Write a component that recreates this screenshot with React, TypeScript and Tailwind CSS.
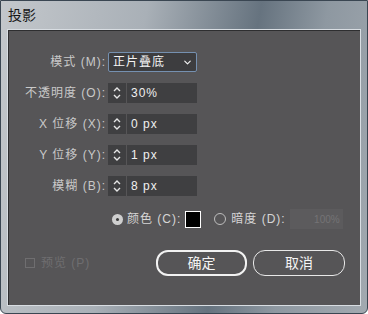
import { ChevronDown } from "lucide-react";

const font = { fontFamily: '"Liberation Sans", "Noto Sans CJK SC", sans-serif' };

function Spinner() {
  return (
    <svg width="10" height="16" viewBox="0 0 10 16" className="text-[#e6e6e6]">
      <path d="M2 6 L5 3 L8 6" fill="none" stroke="currentColor" strokeWidth="1.4" />
      <path d="M2 10 L5 13 L8 10" fill="none" stroke="currentColor" strokeWidth="1.4" />
    </svg>
  );
}

function NumberField({ value }: { value: string }) {
  return (
    <div className="flex h-[20px] w-[89px]">
      <div className="flex w-[18px] items-center justify-center bg-[#3f3f41]">
        <Spinner />
      </div>
      <div className="ml-px flex flex-1 items-center bg-[#3f3f41] pl-[4px] text-[12px] tracking-[1px] text-[#f0f0f0]">
        {value}
      </div>
    </div>
  );
}

function Row({ label, children }: { label: string; children: React.ReactNode }) {
  return (
    <div className="flex h-[20px] items-center">
      <div className="w-[99px] whitespace-pre pr-[1px] text-right text-[12px] tracking-[1px] text-[#c9c9c9]">{label}</div>
      <div className="ml-[1px]">{children}</div>
    </div>
  );
}

export default function App() {
  return (
    <div
      className="relative h-[314px] w-[368px] overflow-hidden rounded-b-[6px] border border-[#3a4652] bg-[linear-gradient(100deg,#c3c7cb_0%,#a9b0b7_35%,#66737f_62%,#8e98a1_78%,#a2a9b0_100%)]"
      style={font}
    >
      <div className="flex h-[28px] items-center pl-[7px] text-[14px] text-[#161616]">投影</div>
      <div className="mx-[6px] flex h-[277px] flex-col border border-[#d8dde2] bg-[#565557] shadow-[inset_1px_1px_0_#2e2e30]">
        <div className="flex flex-col gap-[11px] pt-[22px]">
          <Row label="模式 (M):">
            <div className="flex h-[20px] w-[89px] items-center justify-between rounded-[2px] border border-[#7590b0] bg-[#3d3d3f] pl-[4px] pr-[3px] text-[12px] tracking-[1px] text-[#f4f4f4]">
              <span>正片叠底</span>
              <ChevronDown size={11} strokeWidth={2.5} />
            </div>
          </Row>
          <Row label="不透明度 (O):">
            <NumberField value="30%" />
          </Row>
          <Row label="X 位移 (X):">
            <NumberField value="0 px" />
          </Row>
          <Row label="Y 位移 (Y):">
            <NumberField value="1 px" />
          </Row>
          <Row label="模糊 (B):">
            <NumberField value="8 px" />
          </Row>
        </div>

        <div className="mt-[13px] flex h-[20px] items-center pl-[104px] text-[12px] tracking-[1px] text-[#d6d6d6]">
          <div className="flex h-[11px] w-[11px] items-center justify-center rounded-full bg-[#cfcfcf]">
            <div className="h-[3px] w-[3px] rounded-full bg-[#3a3a3a]" />
          </div>
          <span className="ml-[4px]">颜色 (C):</span>
          <div className="ml-[4px] h-[17px] w-[16px] border border-white bg-black" />
          <div className="ml-[13px] h-[12px] w-[12px] rounded-full border border-[#bdbdbd]" />
          <span className="ml-[5px]">暗度 (D):</span>
          <div className="ml-[4px] flex h-[20px] w-[53px] items-center justify-end bg-[#5c5b5d] pr-[3px] text-[10px] tracking-normal text-[#747375]">
            100%
          </div>
        </div>

        <div className="mt-[21px] flex items-center">
          <div className="ml-[17px] flex items-center text-[12px] tracking-[1px] text-[#6f6e70]">
            <div className="h-[10px] w-[10px] border border-[#6f6e70]" />
            <span className="ml-[6px]">预览 (P)</span>
          </div>
          <div className="ml-auto mr-[15px] flex gap-[6px]">
            <button className="flex h-[26px] w-[91px] items-center justify-center rounded-[12px] border-2 border-[#f2f2f2] text-[14px] text-[#f4f4f4]">
              确定
            </button>
            <button className="flex h-[26px] w-[92px] items-center justify-center rounded-[12px] border border-[#e8e8e8] text-[14px] text-[#f4f4f4]">
              取消
            </button>
          </div>
        </div>
      </div>
    </div>
  );
}
